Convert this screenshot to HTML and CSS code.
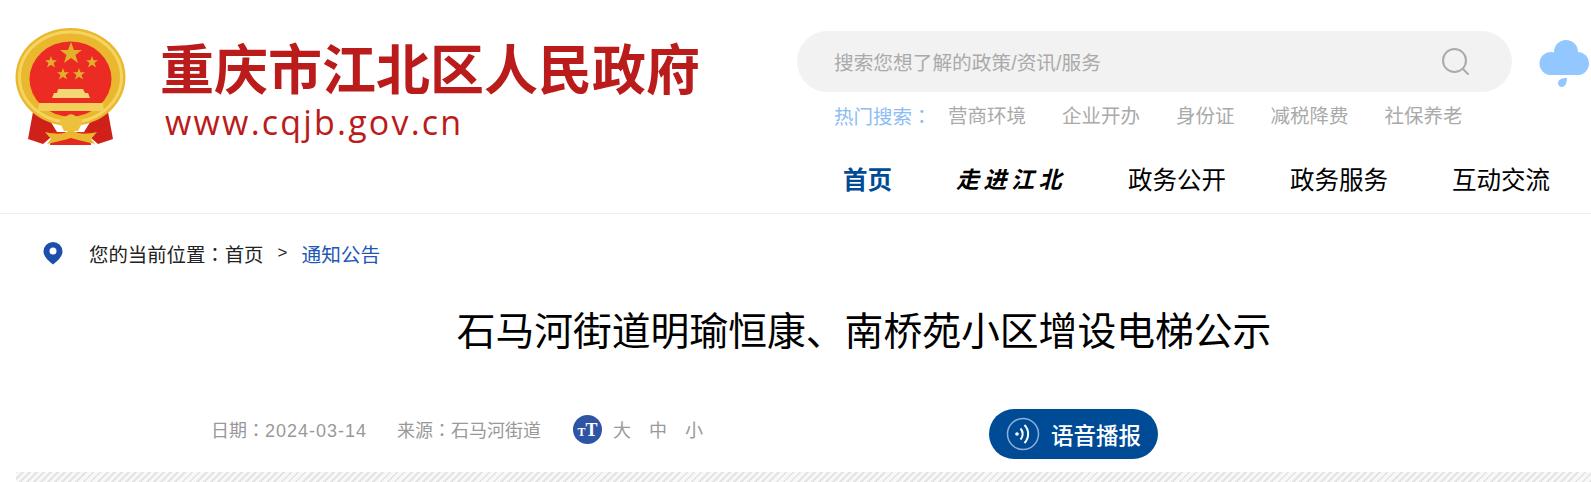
FILE: index.html
```html
<!DOCTYPE html>
<html lang="zh-CN">
<head>
  <meta charset="UTF-8" />
  <meta name="viewport" content="width=device-width, initial-scale=1.0" />
  <title>石马河街道明瑜恒康、南桥苑小区增设电梯公示</title>
  <link rel="stylesheet" href="styles.css">
</head>
<body>
  <!-- Header -->
  <header class="header">
    <div class="logo">
      <svg class="emblem" viewBox="0 0 150 140" width="150" height="140">
        <path fill="#cf2119" d="M33 102l-5 27 15 5 14-12-8-13zM108 102l5 27-15 5-14-12 8-13z"/>
        <path fill="#e3281f" d="M52 122h37l2 13H50z"/>
        <ellipse cx="70.500" cy="67" rx="55" ry="49" fill="#e9b82f"/>
        <ellipse cx="70.500" cy="67" rx="51" ry="45" fill="none" stroke="#f5d55f" stroke-width="3"/>
        <ellipse cx="70.500" cy="69" rx="41" ry="37.500" fill="#ec2b24"/>
        <polygon fill="#e3b02c" points="71,32 74,40 82,40 75.500,45 78,53 71,48 64,53 66.500,45 60,40 68,40"/>
        <polygon fill="#e3b02c" points="51,46 52.500,50.200 57,50.200 53.500,53 55,57.500 51,54.800 47,57.500 48.500,53 45,50.200 49.500,50.200"/>
        <polygon fill="#e3b02c" points="92,46 93.500,50.200 98,50.200 94.500,53 96,57.500 92,54.800 88,57.500 89.500,53 86,50.200 90.500,50.200"/>
        <polygon fill="#e3b02c" points="63,58 64.500,62.200 69,62.200 65.500,65 67,69.500 63,66.800 59,69.500 60.500,65 57,62.200 61.500,62.200"/>
        <polygon fill="#e3b02c" points="79,58 80.500,62.200 85,62.200 81.500,65 83,69.500 79,66.800 75,69.500 76.500,65 73,62.200 77.500,62.200"/>
        <path fill="#f4d774" d="M58 79h25l2 4h3l2 5H52l2-5h3z"/>
        <path fill="#f3d05a" d="M39 93h64l1 8H38z"/>
        <path fill="#e9b82f" d="M45 122c8 2 14 2 19 1l7-3 7 3c5 1 11 1 19-1l-6 7 4 5-17-4-7-2-7 2-17 4 4-5z"/>
        <path fill="#edc13d" d="M60 113a5 5 0 0 1 6-6 6 6 0 0 1 10 0 5 5 0 0 1 6 6l-4 8H64z"/>
      </svg>
      <div class="logo-text">
        <div class="logo-name">重庆市江北区人民政府</div>
        <div class="logo-url">www.cqjb.gov.cn</div>
      </div>
    </div>

    <div class="header-right">
      <div class="search-row">
        <form class="search-box">
          <span class="search-hint">搜索您想了解的政策/资讯/服务</span>
          <svg class="search-icon" viewBox="0 0 30 30" width="30" height="30">
            <circle cx="13.500" cy="13.500" r="11.500" fill="none" stroke="#aaa" stroke-width="2"/>
            <path d="M22 22l5 5" stroke="#aaa" stroke-width="2" stroke-linecap="round"/>
          </svg>
        </form>
        <svg class="weather" viewBox="0 0 50 48" width="50" height="48">
          <g fill="#93c7ff">
            <circle cx="27" cy="12" r="12"/>
            <circle cx="12" cy="23.500" r="11.500"/>
            <circle cx="38.500" cy="23.500" r="11.500"/>
            <rect x="12" y="14" width="26" height="21"/>
            <path d="M28 38c0 5-2 9-5 9s-4-2-4-4c0-3 3-5 9-5z"/>
          </g>
        </svg>
      </div>
      <div class="hot">
        <span class="hot-label">热门搜索<span class="colon" lang="zh-TW">：</span></span>
        <a>营商环境</a>
        <a>企业开办</a>
        <a>身份证</a>
        <a>减税降费</a>
        <a>社保养老</a>
      </div>
      <nav class="nav">
        <a class="active">首页</a>
        <a class="nav-art">走进江北</a>
        <a>政务公开</a>
        <a>政务服务</a>
        <a>互动交流</a>
      </nav>
    </div>
  </header>

  <!-- Breadcrumb -->
  <div class="crumb">
    <svg class="pin" viewBox="0 0 20 24" width="20" height="24">
      <path fill="#1a50ab" d="M10 1a9.500 9.500 0 0 0-9.500 9.500c0 5 4.500 9 9.500 13 5-4 9.500-8 9.500-13A9.500 9.500 0 0 0 10 1z"/>
      <circle cx="10" cy="10" r="3.500" fill="#fff"/>
    </svg>
    <span>您的当前位置<span class="colon" lang="zh-TW">：</span>首页</span>
    <span class="crumb-sep">&gt;</span>
    <a class="crumb-now">通知公告</a>
  </div>

  <!-- Article head -->
  <div class="article">
    <h1 class="article-title">石马河街道明瑜恒康、南桥苑小区增设电梯公示</h1>
    <div class="meta">
      <div class="meta-info">
        <span>日期<span class="colon" lang="zh-TW">：</span><span class="meta-date">2024-03-14</span></span>
        <span class="meta-source">来源<span class="colon" lang="zh-TW">：</span>石马河街道</span>
        <span class="font-icon"><small>T</small>T</span>
        <span class="font-size">大</span>
        <span class="font-size">中</span>
        <span class="font-size">小</span>
      </div>
      <button class="voice" type="button">
        <svg viewBox="0 0 34 34" width="34" height="34">
          <circle cx="17" cy="17" r="15.500" fill="none" stroke="#8fb0d4" stroke-width="1.500"/>
          <circle cx="11" cy="17" r="1.800" fill="#fff"/>
          <path d="M14.500 11.500a8 8 0 0 1 0 11M18.500 8a13 13 0 0 1 0 18" fill="none" stroke="#fff" stroke-width="2"/>
        </svg>
        语音播报
      </button>
    </div>
    <div class="stripe"></div>
  </div>
</body>
</html>
```

FILE: styles.css
```css
html, body {
  margin: 0;
  padding: 0;
  overflow: hidden;
}

body {
  font-family: "Liberation Sans", "Noto Sans CJK SC", sans-serif;
  background-color: #fff;
  color: #000;
  height: 482px;
}

a {
  text-decoration: none;
}

/* full-width colon sits centred in the TC cut, as in the design */
.colon {
  font-family: "Noto Sans CJK TC", sans-serif;
}

/* Header */
.header {
  display: flex;
  justify-content: space-between;
  height: 214px;
  box-sizing: border-box;
  border-bottom: 1px solid #eee;
}

.logo {
  display: flex;
  align-items: flex-start;
  padding-top: 10px;
}

.emblem {
  flex-shrink: 0;
  margin-right: 12px;
}

.logo-text {
  padding-top: 25px;
  color: #ba1c1b;
}

.logo-name {
  margin-left: -2px;
  font-family: "Noto Sans CJK SC", sans-serif;
  font-weight: 700;
  font-size: 54px;
  line-height: 64px;
  white-space: nowrap;
}

.logo-url {
  font-family: "Open Sans", sans-serif;
  font-size: 34px;
  line-height: 46px;
  letter-spacing: 2.200px;
  margin-left: 3px;
}

.header-right {
  width: 794px;
  padding-top: 31px;
  box-sizing: border-box;
}

.search-row {
  display: flex;
  align-items: flex-start;
  gap: 27px;
}

.search-box {
  display: flex;
  justify-content: space-between;
  align-items: center;
  width: 715px;
  height: 61px;
  padding: 0 41px 0 37px;
  box-sizing: border-box;
  background-color: #f2f2f2;
  border-radius: 31px;
  margin: 0;
}

.search-hint {
  font-size: 19.700px;
  color: #aaa;
}

.weather {
  margin-top: 9px;
}

.hot {
  display: flex;
  gap: 36px;
  padding: 10px 0 0 37px;
  font-size: 19.500px;
  line-height: 28px;
  color: #aaa;
}

.hot-label {
  color: #8dbdf2;
  margin-right: -19.500px;
}

.nav {
  display: flex;
  align-items: center;
  gap: 64px;
  padding: 33px 0 0 46px;
  font-size: 24.500px;
  line-height: 34px;
  color: #000;
}

.nav .active {
  font-weight: bold;
  color: #004b96;
}

.nav-art {
  font-family: "Liberation Serif", "Noto Sans CJK SC", serif;
  font-style: italic;
  font-weight: bold;
  font-size: 23px;
  letter-spacing: 4.500px;
  margin-right: -2px;
}

/* Breadcrumb */
.crumb {
  display: flex;
  align-items: center;
  height: 26px;
  margin-top: 26px;
  padding-left: 43px;
  font-size: 19.400px;
  color: #222;
}

.pin {
  margin-right: 26px;
}

.crumb-sep {
  margin: 0 14px;
  font-size: 17px;
}

.crumb-now {
  font-size: 19.700px;
  color: #2257b8;
}

/* Article head */
.article {
  margin-left: 16px;
}

.article-title {
  margin: 38px 0 0;
  padding-left: 121px;
  font-size: 38.800px;
  font-weight: normal;
  line-height: 56px;
  text-align: center;
}

.meta {
  display: flex;
  align-items: center;
  height: 50px;
  margin-top: 49px;
  padding-left: 195px;
  font-size: 18px;
  color: #999;
}

.meta-info {
  display: flex;
  align-items: center;
  width: 778px;
  margin-bottom: 10px;
}

.meta-date {
  letter-spacing: 1px;
}

.meta-source {
  margin-left: 30px;
}

.font-icon {
  display: flex;
  justify-content: center;
  align-items: baseline;
  width: 29px;
  height: 29px;
  margin: 0 11px 0 32px;
  border-radius: 50%;
  background-color: #3054a4;
  color: #fff;
  font-family: "Liberation Serif", serif;
  font-weight: bold;
  font-size: 18px;
  line-height: 31px;
}

.font-icon small {
  font-size: 12px;
}

.font-size {
  margin-right: 18px;
}

.voice {
  display: flex;
  align-items: center;
  gap: 11px;
  height: 50px;
  padding: 0 17px;
  border: none;
  border-radius: 25px;
  background-color: #004b96;
  color: #fff;
  font-family: inherit;
  font-size: 22.500px;
  font-weight: 500;
}

.stripe {
  height: 10px;
  margin-top: 13px;
  background: repeating-linear-gradient(-45deg, #e4e4e4 0 2px, #f8f8f8 2px 5px);
}
```
